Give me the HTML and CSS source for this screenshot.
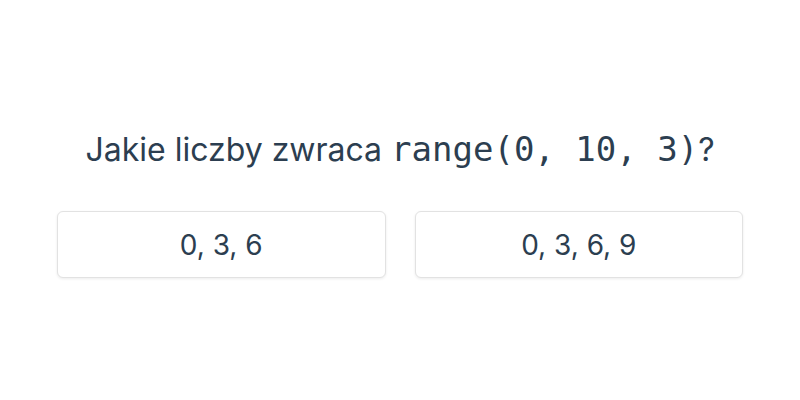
FILE: index.html
```html
<!DOCTYPE html>
<html lang="pl">
<head>
<meta charset="utf-8">
<link rel="stylesheet" href="styles.css">
</head>
<body>
<main class="quiz">
  <h1 class="question">Jakie liczby zwraca <code class="code">range(0, 10, 3)</code>?</h1>
  <div class="answers">
    <button class="answer">0, 3, 6</button>
    <button class="answer">0, 3, 6, 9</button>
  </div>
</main>
</body>
</html>
```
FILE: styles.css
```css
html, body {
  margin: 0;
  padding: 0;
  background: #ffffff;
}
body {
  width: 800px;
  height: 400px;
  font-family: Inter, "Liberation Sans", sans-serif;
  color: #2c3e50;
}
.quiz {
  display: flex;
  flex-direction: column;
  align-items: center;
  padding-top: 126px;
}
.question {
  margin: 0;
  font-size: 32px;
  font-weight: 400;
  line-height: 48px;
  text-align: center;
}
.code {
  font-family: "DejaVu Sans Mono", monospace;
  font-size: 34px;
  line-height: 1;
}
.answers {
  display: grid;
  grid-template-columns: 1fr 1fr;
  gap: 29px;
  width: 686px;
  margin-top: 37px;
}
.answer {
  height: 67px;
  background: #ffffff;
  border: 1px solid #e2e2e2;
  border-radius: 6px;
  box-shadow: 0 1px 3px rgba(0,0,0,0.08);
  font-family: Inter, "Liberation Sans", sans-serif;
  font-size: 28px;
  color: #2c3e50;
  padding: 0;
}
```
